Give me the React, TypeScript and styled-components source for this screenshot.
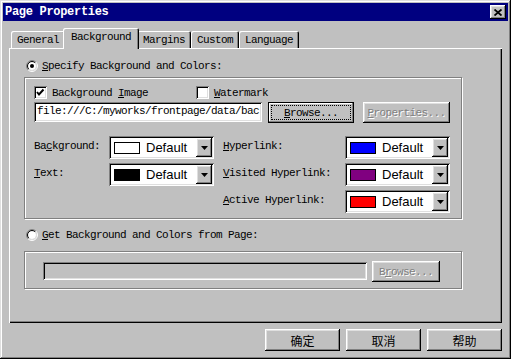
import React from 'react'
import styled, { createGlobalStyle, css } from 'styled-components'

const GlobalStyle = createGlobalStyle`
  html, body {
    margin: 0;
    padding: 0;
    background: #c0c0c0;
  }
  body {
    font-family: "Liberation Mono", "DejaVu Sans Mono", monospace;
    font-size: 11px;
    letter-spacing: -0.6px;
    color: #000;
  }
`

const raised = css`
  box-shadow: inset -1px -1px #000, inset 1px 1px #fff, inset -2px -2px #808080, inset 2px 2px #dfdfdf;
`
const sunken = css`
  box-shadow: inset 1px 1px #808080, inset -1px -1px #fff, inset 2px 2px #000, inset -2px -2px #dfdfdf;
`
const etched = css`
  border: 1px solid #808080;
  box-shadow: inset 1px 1px #fff, 1px 1px #fff;
`

const Window = styled.div`
  width: 511px;
  height: 359px;
  box-sizing: border-box;
  padding: 3px;
  background: #c0c0c0;
  box-shadow: inset -1px -1px #000, inset 1px 1px #dfdfdf, inset -2px -2px #808080, inset 2px 2px #fff;
  display: flex;
  flex-direction: column;
`

const TitleBar = styled.div`
  height: 18px;
  flex-shrink: 0;
  background: #000080;
  display: flex;
  align-items: center;
  justify-content: space-between;
  padding: 0 2px;
  color: #fff;
  font-weight: bold;
  font-size: 12px;
  letter-spacing: -0.3px;
`

const CloseButton = styled.div`
  width: 16px;
  height: 14px;
  background: #c0c0c0;
  ${raised};
  display: flex;
  align-items: center;
  justify-content: center;
`

const Body = styled.div`
  flex: 1;
  display: flex;
  flex-direction: column;
  padding: 7px 6px 0 6px;
`

const TabStrip = styled.div`
  height: 20px;
  display: flex;
  align-items: flex-end;
  padding-left: 2px;
  position: relative;
  z-index: 1;
`

const Tab = styled.div<{ $active?: boolean }>`
  height: ${p => (p.$active ? '21px' : '17px')};
  margin: ${p => (p.$active ? '0 -2px -1px' : '0')};
  padding: ${p => (p.$active ? '3px 8px 0' : '3px 6px 0')};
  box-sizing: border-box;
  background: #c0c0c0;
  border-radius: 2px 2px 0 0;
  box-shadow: inset 1px 1px #fff, inset -1px 0 #000, inset -2px 0 #808080;
  position: relative;
  z-index: ${p => (p.$active ? 2 : 0)};
  white-space: nowrap;
`

const Panel = styled.div`
  height: 275px;
  box-sizing: border-box;
  box-shadow: inset 1px 1px #fff, inset -1px -1px #000, inset -2px -2px #808080;
  padding: 9px 0 0 15px;
  display: flex;
  flex-direction: column;
`

const OptionRow = styled.div<{ $gapTop?: number }>`
  height: 18px;
  display: flex;
  align-items: center;
  gap: 4px;
  margin-left: 2px;
  margin-top: ${p => p.$gapTop ?? 0}px;
`

const GroupBox = styled.div<{ $h: number; $top: number }>`
  width: 438px;
  height: ${p => p.$h}px;
  box-sizing: border-box;
  margin-top: ${p => p.$top}px;
  ${etched};
`

const ImageGroup = styled(GroupBox)`
  padding: 8px 0 0 9px;
`

const PageGroup = styled(GroupBox)`
  padding: 10px 0 0 18px;
  display: flex;
  align-items: flex-start;
`

const CheckRow = styled.div`
  height: 13px;
  display: flex;
  align-items: center;
`

const CheckItem = styled.label<{ $w?: number }>`
  display: flex;
  align-items: center;
  gap: 5px;
  width: ${p => (p.$w ? `${p.$w}px` : 'auto')};
`

const BoxMark = styled.span`
  width: 13px;
  height: 13px;
  flex-shrink: 0;
  background: #fff;
  ${sunken};
  display: flex;
  align-items: center;
  justify-content: center;
`

const FieldRow = styled.div`
  margin-top: 3px;
  display: flex;
  align-items: flex-start;
`

const TextField = styled.div<{ $w: number; $h: number; $disabled?: boolean }>`
  width: ${p => p.$w}px;
  height: ${p => p.$h}px;
  box-sizing: border-box;
  background: ${p => (p.$disabled ? '#c0c0c0' : '#fff')};
  ${sunken};
  padding: 3px 0 0 3px;
  overflow: hidden;
  white-space: nowrap;
`

const Button = styled.div<{ $w: number; $h: number; $gap?: number; $default?: boolean; $disabled?: boolean }>`
  width: ${p => p.$w}px;
  height: ${p => p.$h}px;
  margin-left: ${p => p.$gap ?? 0}px;
  box-sizing: border-box;
  background: #c0c0c0;
  display: flex;
  align-items: center;
  justify-content: center;
  padding: 3px;
  white-space: nowrap;
  ${p =>
    p.$default
      ? css`
          border: 1px solid #000;
          padding: 2px;
          box-shadow: inset -1px -1px #808080, inset 1px 1px #fff;
        `
      : raised};
  ${p =>
    p.$disabled &&
    css`
      color: #808080;
      text-shadow: 1px 1px #fff;
    `};
`

const FocusRect = styled.span`
  flex: 1;
  align-self: stretch;
  border: 1px dotted #000;
  display: flex;
  align-items: center;
  justify-content: center;
`

const ColorGrid = styled.div`
  margin-top: 13px;
  display: grid;
  grid-template-columns: 75px 114px 122px 105px;
  grid-auto-rows: 23px;
  row-gap: 4px;
  align-items: center;
`

const ColorLabel = styled.span`
  margin-top: -3px;
`

const Combo = styled.div`
  width: 105px;
  height: 23px;
  box-sizing: border-box;
  background: #fff;
  ${sunken};
  padding: 2px;
  display: flex;
  align-items: center;
`

const Swatch = styled.span<{ $color: string }>`
  width: 26px;
  height: 12px;
  box-sizing: border-box;
  margin-left: 3px;
  border: 1px solid #000;
  background: ${p => p.$color};
  flex-shrink: 0;
`

const ComboText = styled.span`
  flex: 1;
  margin-left: 6px;
  font-family: "Liberation Sans", Arial, sans-serif;
  font-size: 13px;
  letter-spacing: 0;
`

const ArrowBox = styled.span`
  width: 16px;
  align-self: stretch;
  background: #c0c0c0;
  ${raised};
  display: flex;
  align-items: center;
  justify-content: center;
`

const Footer = styled.div`
  margin-top: 6px;
  display: flex;
  justify-content: flex-end;
  gap: 6px;
`

const CjkButton = styled(Button)`
  font-family: "Noto Sans CJK SC", "Noto Sans", sans-serif;
  font-size: 12px;
  letter-spacing: 0;
`

const Key = styled.span`
  text-decoration: underline;
  text-underline-offset: 1px;
`

const Radio = ({ checked }: { checked?: boolean }) => {
  const arc = (r: number) => {
    const d = r * 0.7071
    return { a: `${6 - d} ${6 + d}`, b: `${6 + d} ${6 - d}`, r }
  }
  const o = arc(5.5)
  const i = arc(4.5)
  return (
    <svg width="12" height="12" viewBox="0 0 12 12">
      <circle cx="6" cy="6" r="4" fill="#fff" />
      <path d={`M${o.a} A${o.r} ${o.r} 0 0 1 ${o.b}`} stroke="#808080" fill="none" />
      <path d={`M${o.b} A${o.r} ${o.r} 0 0 1 ${o.a}`} stroke="#fff" fill="none" />
      <path d={`M${i.a} A${i.r} ${i.r} 0 0 1 ${i.b}`} stroke="#000" fill="none" />
      <path d={`M${i.b} A${i.r} ${i.r} 0 0 1 ${i.a}`} stroke="#dfdfdf" fill="none" />
      {checked && <circle cx="6" cy="6" r="2" fill="#000" />}
    </svg>
  )
}

const Checkbox = ({ checked }: { checked?: boolean }) => (
  <BoxMark>
    {checked && (
      <svg width="9" height="9" viewBox="0 0 9 9">
        <polyline points="1,4 3,6.5 7.5,1.5" stroke="#000" strokeWidth="2" fill="none" />
      </svg>
    )}
  </BoxMark>
)

const ColorCombo = ({ color }: { color: string }) => (
  <Combo>
    <Swatch $color={color} />
    <ComboText>Default</ComboText>
    <ArrowBox>
      <svg width="7" height="4" viewBox="0 0 7 4">
        <polygon points="0,0 7,0 3.5,4" fill="#000" />
      </svg>
    </ArrowBox>
  </Combo>
)

const App = () => {
  return (
    <Window>
      <GlobalStyle />
      <TitleBar>
        <span>Page Properties</span>
        <CloseButton>
          <svg width="8" height="7" viewBox="0 0 8 7">
            <path d="M0.5 0.5 L7.5 6.5 M7.5 0.5 L0.5 6.5" stroke="#000" strokeWidth="1.8" />
          </svg>
        </CloseButton>
      </TitleBar>
      <Body>
        <TabStrip>
          <Tab>General</Tab>
          <Tab $active>Background</Tab>
          <Tab>Margins</Tab>
          <Tab>Custom</Tab>
          <Tab>Language</Tab>
        </TabStrip>
        <Panel>
          <OptionRow>
            <Radio checked />
            <span><Key>S</Key>pecify Background and Colors:</span>
          </OptionRow>
          <ImageGroup $h={142} $top={2}>
            <CheckRow>
              <CheckItem $w={162}>
                <Checkbox checked />
                <span>Background <Key>I</Key>mage</span>
              </CheckItem>
              <CheckItem>
                <Checkbox />
                <span><Key>W</Key>atermark</span>
              </CheckItem>
            </CheckRow>
            <FieldRow>
              <TextField $w={228} $h={20}>file:///C:/myworks/frontpage/data/bac</TextField>
              <Button $w={86} $h={21} $gap={6} $default>
                <FocusRect><span><Key>B</Key>rowse...</span></FocusRect>
              </Button>
              <Button $w={87} $h={21} $gap={9} $disabled>
                <span><Key>P</Key>roperties...</span>
              </Button>
            </FieldRow>
            <ColorGrid>
              <ColorLabel>Ba<Key>c</Key>kground:</ColorLabel>
              <ColorCombo color="#fff" />
              <ColorLabel><Key>H</Key>yperlink:</ColorLabel>
              <ColorCombo color="#0000ff" />
              <ColorLabel><Key>T</Key>ext:</ColorLabel>
              <ColorCombo color="#000" />
              <ColorLabel><Key>V</Key>isited Hyperlink:</ColorLabel>
              <ColorCombo color="#800080" />
              <span />
              <span />
              <ColorLabel><Key>A</Key>ctive Hyperlink:</ColorLabel>
              <ColorCombo color="#ff0000" />
            </ColorGrid>
          </ImageGroup>
          <OptionRow $gapTop={7}>
            <Radio />
            <span><Key>G</Key>et Background and Colors from Page:</span>
          </OptionRow>
          <PageGroup $h={38} $top={7}>
            <TextField $w={324} $h={18} $disabled />
            <Button $w={68} $h={21} $gap={5} $disabled style={{ marginTop: -1 }}>
              <span>B<Key>r</Key>owse...</span>
            </Button>
          </PageGroup>
        </Panel>
        <Footer>
          <CjkButton $w={75} $h={22}>确定</CjkButton>
          <CjkButton $w={75} $h={22}>取消</CjkButton>
          <CjkButton $w={75} $h={22}>帮助</CjkButton>
        </Footer>
      </Body>
    </Window>
  )
}

export default App
